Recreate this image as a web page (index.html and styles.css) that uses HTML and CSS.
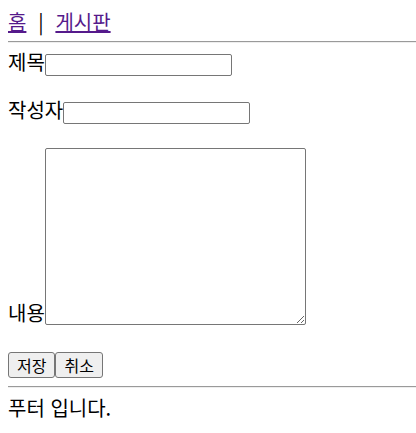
FILE: index.html
```html
<!DOCTYPE html>
<html lang="ko">
<head>
<meta charset="utf-8">
<link rel="stylesheet" href="styles.css">
</head>
<body>
<nav class="nav"><a href="#" class="nav-link">홈</a><span class="sep">|</span><a href="#" class="nav-link">게시판</a></nav>
<hr class="rule rule-top">
<form class="form">
  <div class="row"><label class="label">제목</label><input class="field" type="text"></div>
  <div class="row"><label class="label">작성자</label><input class="field" type="text"></div>
  <div class="row row-area"><label class="label label-area">내용</label><textarea class="area"></textarea></div>
  <div class="actions"><button type="button" class="btn">저장</button><button type="button" class="btn">취소</button></div>
</form>
<hr class="rule rule-bottom">
<footer class="footer">푸터 입니다.</footer>
</body>
</html>
```
FILE: styles.css
```css
html, body {
  background: #fff;
}
body {
  margin: 8px 0 8px 8px;
  font-family: "Noto Sans CJK KR", "Noto Sans", sans-serif;
  font-size: 20px;
  line-height: 24px;
  color: #000;
}
.nav {
  display: flex;
  height: 24px;
  padding-top: 2px;
}
.nav-link {
  color: #551a8b;
  text-decoration: underline;
}
.sep {
  display: inline-block;
  width: 29px;
  text-align: center;
}
.rule {
  border: none;
  border-top: 1px solid #9a9a9a;
  border-bottom: 1px solid #eeeeee;
  height: 0;
  margin: 0;
}
.rule-top {
  margin-top: 7px;
}
.form {
  margin: 0;
  padding-top: 9px;
}
.row {
  display: flex;
  align-items: flex-end;
  margin-bottom: 24px;
}
.label {
  line-height: 20px;
  padding-bottom: 4px;
}
.label-area {
  padding-bottom: 2px;
}
.row-area {
  margin-bottom: 27px;
}
.field {
  width: 187px;
  height: 22px;
  box-sizing: border-box;
  border: 1px solid #767676;
  border-radius: 2px;
  padding: 1px 2px;
  margin: 0;
  font-size: 13px;
}
.area {
  width: 261px;
  height: 177px;
  box-sizing: border-box;
  border: 1px solid #767676;
  border-radius: 2px;
  margin: 0;
  padding: 2px;
  font-family: "DejaVu Sans Mono", monospace;
  font-size: 13px;
}
.actions {
  display: flex;
}
.btn {
  height: 26px;
  box-sizing: border-box;
  padding: 0 8px;
  margin: 0;
  border: 1px solid #767676;
  border-radius: 3px;
  background: #efefef;
  font-family: "Noto Sans CJK KR", sans-serif;
  font-size: 16px;
  line-height: 22px;
  color: #000;
}
.rule-bottom {
  margin-top: 8px;
}
.footer {
  padding-top: 8px;
}
```
